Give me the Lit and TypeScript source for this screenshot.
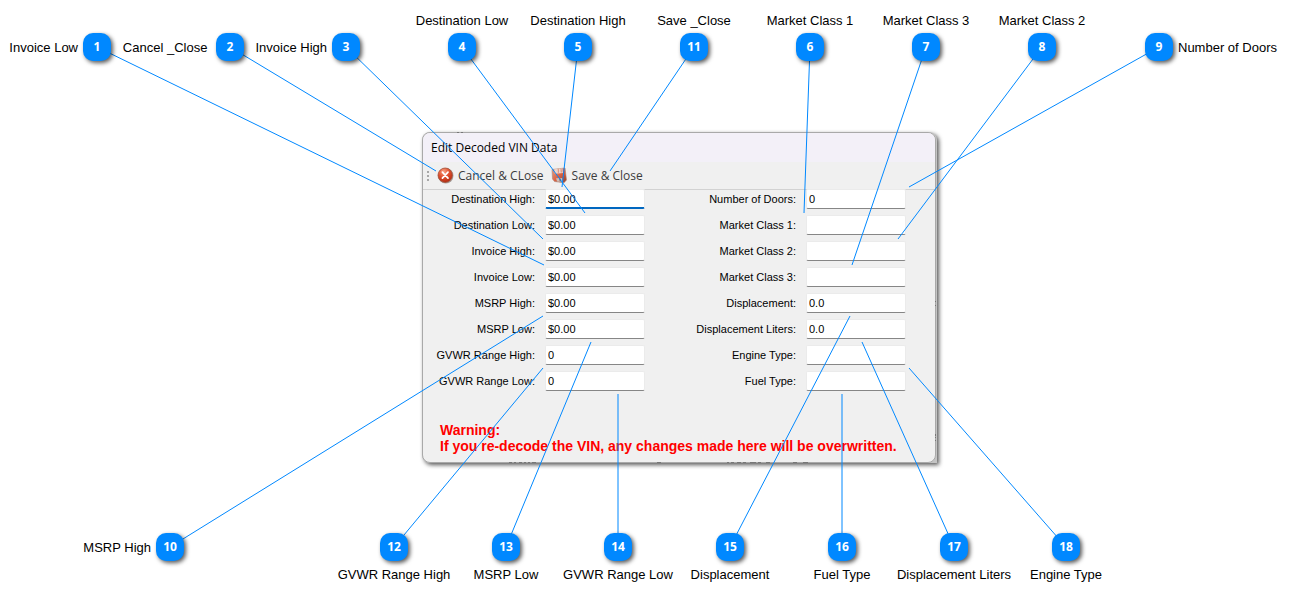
import { LitElement, html, css, svg } from "lit";
import { customElement } from "lit/decorators.js";

type Side = "above" | "below" | "left" | "right";

interface Callout {
  id: number;
  text: string;
  side: Side;
  x: number;
  y: number;
  tx: number;
  ty: number;
}

const CALLOUTS: Callout[] = [
  { id: 1, text: "Invoice Low", side: "left", x: 97, y: 47, tx: 544, ty: 265 },
  { id: 2, text: "Cancel _Close ", side: "left", x: 230, y: 47, tx: 436, ty: 171 },
  { id: 3, text: "Invoice High", side: "left", x: 346, y: 47, tx: 543, ty: 239 },
  { id: 4, text: "Destination Low", side: "above", x: 462, y: 47, tx: 585, ty: 213 },
  { id: 5, text: "Destination High", side: "above", x: 578, y: 47, tx: 562, ty: 187 },
  { id: 11, text: "Save _Close", side: "above", x: 694, y: 47, tx: 610, ty: 171 },
  { id: 6, text: "Market Class 1", side: "above", x: 810, y: 47, tx: 804, ty: 213 },
  { id: 7, text: "Market Class 3", side: "above", x: 926, y: 47, tx: 852, ty: 265 },
  { id: 8, text: "Market Class 2", side: "above", x: 1042, y: 47, tx: 898, ty: 239 },
  { id: 9, text: "Number of Doors", side: "right", x: 1159, y: 47, tx: 909, ty: 187 },
  { id: 10, text: "MSRP High", side: "left", x: 170, y: 547, tx: 543, ty: 316 },
  { id: 12, text: "GVWR Range High", side: "below", x: 394, y: 547, tx: 543, ty: 368 },
  { id: 13, text: "MSRP Low", side: "below", x: 506, y: 547, tx: 591, ty: 342 },
  { id: 14, text: "GVWR Range Low", side: "below", x: 618, y: 547, tx: 618, ty: 394 },
  { id: 15, text: "Displacement", side: "below", x: 730, y: 547, tx: 850, ty: 316 },
  { id: 16, text: "Fuel Type", side: "below", x: 842, y: 547, tx: 842, ty: 394 },
  { id: 17, text: "Displacement Liters", side: "below", x: 954, y: 547, tx: 862, ty: 342 },
  { id: 18, text: "Engine Type", side: "below", x: 1066, y: 547, tx: 909, ty: 368 },
];

const PRICE_FIELDS: [string, string][] = [
  ["Destination High", "$0.00"],
  ["Destination Low", "$0.00"],
  ["Invoice High", "$0.00"],
  ["Invoice Low", "$0.00"],
  ["MSRP High", "$0.00"],
  ["MSRP Low", "$0.00"],
  ["GVWR Range High", "0"],
  ["GVWR Range Low", "0"],
];

const SPEC_FIELDS: [string, string][] = [
  ["Number of Doors", "0"],
  ["Market Class 1", ""],
  ["Market Class 2", ""],
  ["Market Class 3", ""],
  ["Displacement", "0.0"],
  ["Displacement Liters", "0.0"],
  ["Engine Type", ""],
  ["Fuel Type", ""],
];

@customElement("vin-dialog")
export class VinDialog extends LitElement {
  static styles = css`
    :host {
      display: block;
      background: #c4c4c4;
      box-shadow: 2px 2px 4px rgba(0, 0, 0, 0.65);
      border-radius: 8px 8px 0 8px;
      font-family: "Liberation Sans", Arial, sans-serif;
      color: #000;
    }
    .window {
      border: 1px solid #a9a9a9;
      border-radius: 8px;
      background: #f0f0f0;
      overflow: hidden;
      margin-right: 1px;
    }
    .title {
      margin: 0;
      padding: 0 8px;
      background: #f3f0f8;
      font: 12px/29px "Open Sans", "Noto Sans", sans-serif;
    }
    .toolbar {
      display: flex;
      align-items: center;
      height: 27px;
      padding-left: 4px;
      border-bottom: 1px solid #d2d2d2;
    }
    .grip {
      display: grid;
      gap: 2px;
      width: 2px;
      margin-right: 8px;
    }
    .grip i {
      height: 2px;
      background: #a8a8a8;
    }
    .tool {
      display: flex;
      align-items: center;
      gap: 4px;
      margin: 0 7px 0 0;
      padding: 0;
      border: 0;
      background: none;
      color: #3c3c3c;
      font: 12px/18px "Open Sans", "Noto Sans", sans-serif;
      white-space: nowrap;
    }
    .form {
      display: grid;
      grid-template-columns: 222px 1fr;
      margin-top: -1px;
    }
    .column {
      display: grid;
      grid-template-columns: 1fr 100px;
      column-gap: 10px;
      row-gap: 6px;
      align-items: center;
    }
    .column.second {
      margin-right: 29px;
    }
    label {
      font-size: 11px;
      line-height: 20px;
      text-align: right;
      white-space: nowrap;
    }
    input {
      box-sizing: border-box;
      width: 100%;
      height: 20px;
      margin: 0;
      padding: 0 2px;
      border: 1px solid #ebebeb;
      border-bottom-color: #868686;
      border-radius: 2px;
      background: #fff;
      color: #000;
      font: 11px "Liberation Sans", Arial, sans-serif;
      outline: 0;
    }
    input.active {
      border-bottom: 2px solid #0067c0;
    }
    .warning {
      margin: 0;
      padding: 31px 0 8px 17px;
      color: #f00;
      font-size: 14px;
      font-weight: bold;
      line-height: 16px;
      white-space: nowrap;
    }
  `;

  private column(fields: [string, string][], prefix: string, extra = "") {
    return html`<div class="column ${extra}">
      ${fields.map(
        ([name, value], i) => html`
          <label for="${prefix}${i}">${name}:</label>
          <input
            id="${prefix}${i}"
            type="text"
            class=${prefix === "price" && i === 0 ? "active" : ""}
            .value=${value}
          />
        `
      )}
    </div>`;
  }

  render() {
    return html`<section class="window" aria-label="Edit Decoded VIN Data">
      <h1 class="title">Edit Decoded VIN Data</h1>
      <div class="toolbar">
        <span class="grip"><i></i><i></i><i></i></span>
        <button class="tool" type="button">
          <svg width="17" height="17" viewBox="0 0 17 17" aria-hidden="true">
            <defs>
              <radialGradient id="ball" cx="0.4" cy="0.25" r="0.75">
                <stop offset="0" stop-color="#f7a184" />
                <stop offset="0.5" stop-color="#e2522f" />
                <stop offset="1" stop-color="#b52c12" />
              </radialGradient>
            </defs>
            <circle cx="8.8" cy="8.8" r="7.7" fill="#8a7d78" opacity="0.7" />
            <circle cx="8.2" cy="8.2" r="7.2" fill="url(#ball)" stroke="#a5553f" stroke-width="0.8" />
            <path d="M5.4 5.2l5.6 6M11 5.2l-5.6 6" stroke="#fff" stroke-width="1.7" stroke-linecap="round" />
          </svg>
          Cancel &amp; CLose
        </button>
        <button class="tool" type="button">
          <svg width="17" height="17" viewBox="0 0 17 17" aria-hidden="true">
            <defs>
              <linearGradient id="disk" x1="0" y1="0" x2="1" y2="1">
                <stop offset="0" stop-color="#dda794" />
                <stop offset="0.5" stop-color="#de6443" />
                <stop offset="1" stop-color="#8e3f2c" />
              </linearGradient>
            </defs>
            <path d="M1 2.5L14 1l1.5 12L13 15.8 3.5 14.500 1.500 12z" fill="url(#disk)" stroke="#a98578" stroke-width="0.6" />
            <path d="M3.200 2.200l8.200-1 .5 4.800-8 .8z" fill="#ecd5cc" />
            <path d="M7.200 1.800l.2 4M10 1.500l.3 4" stroke="#d98a72" stroke-width="1" />
            <path d="M5 11.300l6.200-.3.6 4.200-5.800-.7z" fill="#cbbdb8" />
            <path d="M9 11.600l.4 2.800" stroke="#6d5048" stroke-width="1.300" />
          </svg>
          Save &amp; Close
        </button>
      </div>
      <form class="form">
        ${this.column(PRICE_FIELDS, "price")} ${this.column(SPEC_FIELDS, "spec", "second")}
      </form>
      <p class="warning">
        Warning:<br />If you re-decode the VIN, any changes made here will be overwritten.
      </p>
    </section>`;
  }
}

@customElement("app-root")
export class AppRoot extends LitElement {
  static styles = css`
    :host {
      display: block;
      background: #fff;
      font-family: "Liberation Sans", Arial, sans-serif;
    }
    .diagram {
      position: relative;
      display: grid;
      grid-template-columns: 422px minmax(0, 515px) 1fr;
      box-sizing: border-box;
      min-height: 100vh;
      margin: 0;
      padding: 132px 0;
      align-items: start;
      overflow: hidden;
    }
    vin-dialog {
      grid-column: 2;
    }
    .lines {
      position: absolute;
      inset: 0;
      width: 100%;
      height: 100%;
      pointer-events: none;
    }
    .leader {
      stroke: #0088ff;
      stroke-width: 1;
    }
    .pin {
      position: absolute;
      width: 28px;
      height: 28px;
      margin: -14px 0 0 -14px;
      border-radius: 10px;
      background: #0088ff;
      box-shadow: 2px 2px 4px rgba(0, 0, 0, 0.65);
      color: #fff;
      font: bold 12px/28px "Open Sans", "Noto Sans", sans-serif;
      text-align: center;
    }
    .caption {
      position: absolute;
      color: #000;
      font: 13px/16px "Liberation Sans", Arial, sans-serif;
      white-space: pre;
    }
    .above,
    .below {
      left: 50%;
      transform: translateX(-50%);
    }
    .above {
      bottom: 32px;
    }
    .below {
      top: 34px;
    }
    .left,
    .right {
      top: 7px;
    }
    .left {
      right: 33px;
    }
    .right {
      left: 33px;
    }
  `;

  render() {
    return html`<figure class="diagram">
      <vin-dialog></vin-dialog>
      <svg class="lines" aria-hidden="true">
        <path
          d="M457 132.500h2m2 0h2M509 462.500h3m2 0h2m3 0h3m2 0h2m2 0h2m2 0h4M657 462.500h4M727 462.500h2m2 0h3m3 0h4m2 0h3m4 0h6m2 0h3m5 0h4M793 462.500h4m6 0h5M935.500 301v1m0 3v1M935.500 434v2m0 1v1m0 2v1"
          stroke="#777"
          fill="none"
        />
        ${CALLOUTS.map(
          (c) => svg`<line class="leader" x1=${c.x} y1=${c.y} x2=${c.tx} y2=${c.ty} />`
        )}
      </svg>
      ${CALLOUTS.map(
        (c) => html`<div class="pin" style="left:${c.x}px;top:${c.y}px">
          ${c.id}<span class="caption ${c.side}">${c.text}</span>
        </div>`
      )}
    </figure>`;
  }
}
